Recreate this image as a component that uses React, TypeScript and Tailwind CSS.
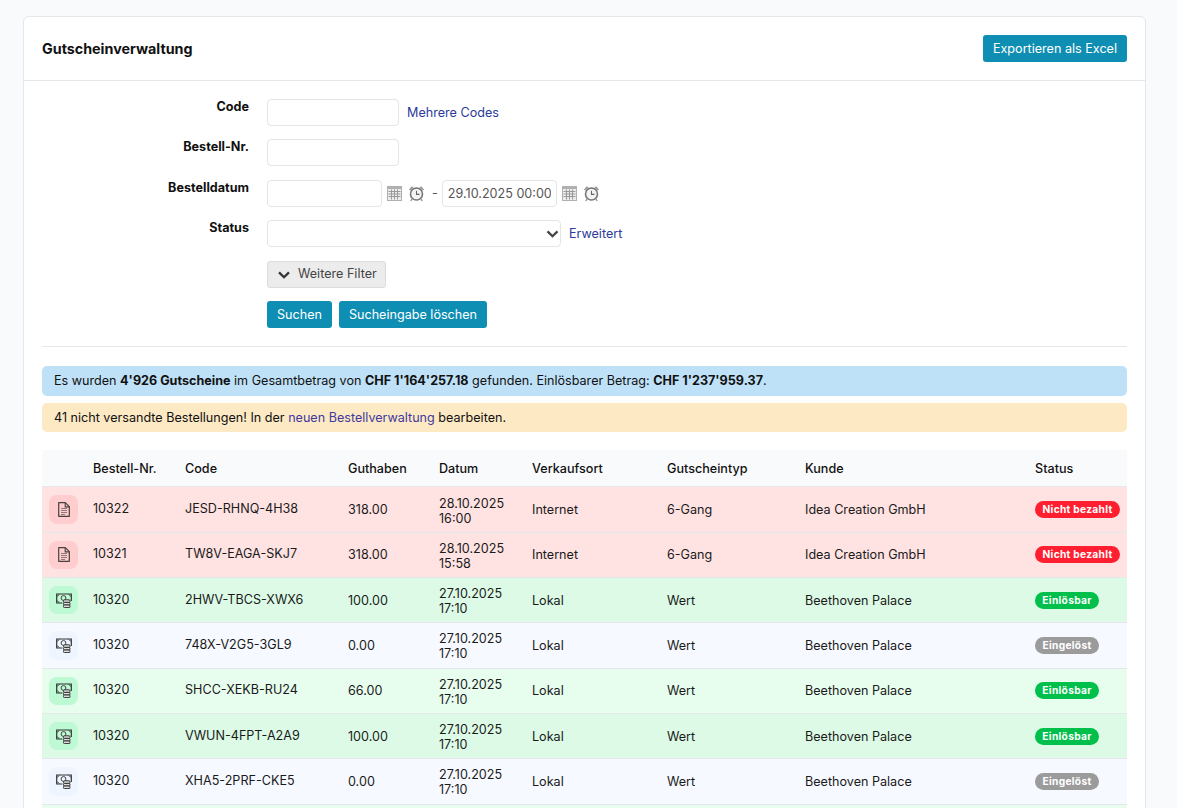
import React from 'react';

type Row = {
    nr: string;
    code: string;
    amount: string;
    date: string;
    time: string;
    place: string;
    type: string;
    customer: string;
    status: 'unpaid' | 'open' | 'used';
    stripe?: boolean;
};

const ROWS: Row[] = [
    { nr: '10322', code: 'JESD-RHNQ-4H38', amount: '318.00', date: '28.10.2025', time: '16:00', place: 'Internet', type: '6-Gang', customer: 'Idea Creation GmbH', status: 'unpaid' },
    { nr: '10321', code: 'TW8V-EAGA-SKJ7', amount: '318.00', date: '28.10.2025', time: '15:58', place: 'Internet', type: '6-Gang', customer: 'Idea Creation GmbH', status: 'unpaid' },
    { nr: '10320', code: '2HWV-TBCS-XWX6', amount: '100.00', date: '27.10.2025', time: '17:10', place: 'Lokal', type: 'Wert', customer: 'Beethoven Palace', status: 'open' },
    { nr: '10320', code: '748X-V2G5-3GL9', amount: '0.00', date: '27.10.2025', time: '17:10', place: 'Lokal', type: 'Wert', customer: 'Beethoven Palace', status: 'used' },
    { nr: '10320', code: 'SHCC-XEKB-RU24', amount: '66.00', date: '27.10.2025', time: '17:10', place: 'Lokal', type: 'Wert', customer: 'Beethoven Palace', status: 'open', stripe: true },
    { nr: '10320', code: 'VWUN-4FPT-A2A9', amount: '100.00', date: '27.10.2025', time: '17:10', place: 'Lokal', type: 'Wert', customer: 'Beethoven Palace', status: 'open' },
    { nr: '10320', code: 'XHA5-2PRF-CKE5', amount: '0.00', date: '27.10.2025', time: '17:10', place: 'Lokal', type: 'Wert', customer: 'Beethoven Palace', status: 'used' },
];

const CalendarIcon = () => (
    <svg width="15" height="15" viewBox="0 0 15 15" className="shrink-0">
        <rect x="0" y="0" width="15" height="15" fill="#b0b0b0" />
        <rect x="1" y="3" width="13" height="11" fill="#ececec" />
        <path d="M1.5 5.5h12M1.5 8h12M1.5 10.5h12M4.5 3.5v10M7.5 3.5v10M10.5 3.5v10" stroke="#9a9a9a" strokeWidth="1" fill="none" />
    </svg>
);

const ClockIcon = () => (
    <svg width="17" height="17" viewBox="0 0 17 17" fill="none" className="shrink-0">
        <circle cx="8.5" cy="9" r="6" stroke="#777" strokeWidth="1.6" fill="#f4f4f4" />
        <path d="M8.5 5.8v3.6h3" stroke="#666" strokeWidth="1.1" />
        <path d="M1 4.4 3.8 1.2 5.6 2.6 2.4 5.8zM16 4.4l-2.8-3.2-1.8 1.4 3.2 3.2z" fill="#999" />
        <path d="M4 14 2.8 16M13 14l1.2 2" stroke="#888" strokeWidth="1.3" />
    </svg>
);

const Chevron = ({ className }: { className: string }) => (
    <svg viewBox="0 0 14 9" fill="none" className={className}>
        <path d="M1.4 1.6 7 7l5.6-5.4" stroke="currentColor" strokeWidth="2.6" />
    </svg>
);

const DocIcon = () => (
    <svg width="12" height="15" viewBox="0 0 12 15" fill="none">
        <path d="M.7.7h6.6l4 4v9.6H.7z" stroke="#4a3f3f" strokeWidth="1.2" strokeLinejoin="round" />
        <path d="M7.2.9v4h4" stroke="#4a3f3f" strokeWidth="1.1" />
        <path d="M3 6.5h6M3 8.5h6M3 10.5h6M3 12.5h4" stroke="#8a7a7a" strokeWidth="1.1" />
    </svg>
);

const MoneyIcon = () => (
    <svg width="16" height="15" viewBox="0 0 16 15" fill="none">
        <path d="M6.5 10H.7V1h14.6v7" stroke="#333" strokeWidth="1.2" />
        <path d="M1 3.6 3.2 1.4M12.8 1.4 15 3.6M1 7.4l2.2 2.2" stroke="#333" strokeWidth="1" />
        <circle cx="7.5" cy="5" r="2.4" stroke="#444" strokeWidth="1" />
        <rect x="7.5" y="6.8" width="6.5" height="2.6" rx="1" fill="#ddd" stroke="#333" strokeWidth="1" />
        <rect x="7.5" y="9.4" width="6.5" height="2.6" rx="1" fill="#ddd" stroke="#333" strokeWidth="1" />
        <rect x="7.5" y="12" width="6.5" height="2.6" rx="1" fill="#ddd" stroke="#333" strokeWidth="1" />
    </svg>
);

const inputClass = 'h-[27px] rounded-[4px] border border-[#e5e5e5] bg-white';

const Label = ({ children }: { children: React.ReactNode }) => (
    <div className="w-[207px] shrink-0 text-right font-bold leading-[15px] text-[#111]">{children}</div>
);

const FormRow = ({ label, children }: { label?: string; children: React.ReactNode }) => (
    <div className="flex gap-[18px]">
        <Label>{label}</Label>
        <div className="flex items-center">{children}</div>
    </div>
);

const Badge = ({ status }: { status: Row['status'] }) => {
    if (status === 'unpaid') {
        return <span className="inline-block w-[85px] rounded-full bg-[#ff1f30] text-center text-[10.2px] font-bold leading-[17px] tracking-[0.3px] text-white">Nicht bezahlt</span>;
    }
    if (status === 'open') {
        return <span className="inline-block w-[64px] rounded-full bg-[#00c04b] text-center text-[10.2px] font-bold leading-[17px] tracking-[0.3px] text-white">Einlösbar</span>;
    }
    return <span className="inline-block w-[64px] rounded-full bg-[#9b9b9b] text-center text-[10.2px] font-bold leading-[17px] tracking-[0.3px] text-white">Eingelöst</span>;
};

const rowBg = (row: Row) => {
    if (row.status === 'unpaid') return 'bg-[#ffe2e2]';
    if (row.status === 'used') return 'bg-[#f6f9ff]';
    return row.stripe ? 'bg-[#e7fdee]' : 'bg-[#dcfae6]';
};

const iconBg = (row: Row) => {
    if (row.status === 'unpaid') return 'bg-[#ffcdcd]';
    if (row.status === 'used') return 'bg-[#eff5ff]';
    return 'bg-[#bdf9d2]';
};

export default function App() {
    return (
        <div
            className="h-[808px] overflow-hidden bg-[#f9fafb] px-[23px] pt-4 text-[12.6px] text-[#1a1a1a]"
            style={{ fontFamily: 'Inter, sans-serif', width: 1177 }}
        >
            <div className="w-[1123px] rounded-t-[6px] border border-[#e5e7eb] bg-white">
                {/* Header */}
                <div className="flex h-[64px] items-center justify-between border-b border-[#e5e7eb] px-[18px]">
                    <h1 className="text-[14.3px] font-bold text-[#111]">Gutscheinverwaltung</h1>
                    <button className="h-[27px] rounded-[3px] bg-[#0f8eb3] px-[10px] pt-[1px] text-white">Exportieren als Excel</button>
                </div>

                <div className="px-[18px] pt-[18px]">
                    {/* Filter */}
                    <div className="flex flex-col gap-[13.4px] border-b border-[#e5e7eb] pb-[18px]">
                        <FormRow label="Code">
                            <input className={`${inputClass} w-[132px]`} />
                            <a className="ml-2 pt-[1px] text-[#2b3a9b]">Mehrere Codes</a>
                        </FormRow>
                        <FormRow label="Bestell-Nr.">
                            <input className={`${inputClass} w-[132px]`} />
                        </FormRow>
                        <FormRow label="Bestelldatum">
                            <input className={`${inputClass} w-[115px]`} />
                            <span className="ml-[5px] flex items-center gap-[6px]"><CalendarIcon /><ClockIcon /></span>
                            <span className="ml-[7px] mr-[4px] text-[#555]">-</span>
                            <input className={`${inputClass} w-[115px] px-[5px] text-[#555]`} defaultValue="29.10.2025 00:00" />
                            <span className="ml-[5px] flex items-center gap-[6px]"><CalendarIcon /><ClockIcon /></span>
                        </FormRow>
                        <FormRow label="Status">
                            <div className="relative h-[27px] w-[294px]">
                                <select className={`${inputClass} w-full appearance-none`} />
                                <Chevron className="absolute right-[2px] top-[10px] h-[8px] w-[13px] text-[#444]" />
                            </div>
                            <a className="ml-2 pt-[1px] text-[#2b3a9b]">Erweitert</a>
                        </FormRow>
                        <FormRow>
                            <button className="flex h-[27px] w-[119px] items-center gap-[7px] rounded-[3px] border border-[#dcdcdc] bg-[#ececec] pl-[9px] pt-[1px] text-[#444]">
                                <Chevron className="h-[8px] w-[14px] text-[#333]" />
                                Weitere Filter
                            </button>
                        </FormRow>
                        <FormRow>
                            <div className="flex gap-[7px]">
                                <button className="h-[27px] w-[65px] rounded-[3px] bg-[#0f8eb3] pt-[1px] text-white">Suchen</button>
                                <button className="h-[27px] w-[148px] rounded-[3px] bg-[#0f8eb3] pt-[1px] text-white">Sucheingabe löschen</button>
                            </div>
                        </FormRow>
                    </div>

                    {/* Notices */}
                    <div className="mt-[19px] flex h-[30px] items-center rounded-[5px] bg-[#bfe1f8] px-[12px] pt-[1px] text-[#111]">
                        <span>Es wurden <b className="font-bold">4'926 Gutscheine</b> im Gesamtbetrag von <b className="font-bold">CHF 1'164'257.18</b> gefunden. Einlösbarer Betrag: <b className="font-bold">CHF 1'237'959.37</b>.</span>
                    </div>
                    <div className="mt-[7px] flex h-[29px] items-center rounded-[5px] bg-[#fde9c3] px-[12px] pt-[1px] text-[#111]">
                        <span>41 nicht versandte Bestellungen! In der <a className="text-[#3f3a9e]">neuen Bestellverwaltung</a> bearbeiten.</span>
                    </div>

                    {/* Table */}
                    <table className="mt-[18px] w-[1085px] table-fixed border-collapse text-left">
                        <colgroup>
                            <col className="w-[51px]" />
                            <col className="w-[92px]" />
                            <col className="w-[163px]" />
                            <col className="w-[91px]" />
                            <col className="w-[93px]" />
                            <col className="w-[135px]" />
                            <col className="w-[138px]" />
                            <col className="w-[230px]" />
                            <col className="w-[92px]" />
                        </colgroup>
                        <thead>
                            <tr className="h-[37px] border-b border-[#e5e7eb] bg-[#f9fafb]">
                                <th />
                                <th className="pt-[2px] font-medium text-[#111]">Bestell-Nr.</th>
                                <th className="pt-[2px] font-medium text-[#111]">Code</th>
                                <th className="pt-[2px] font-medium text-[#111]">Guthaben</th>
                                <th className="pt-[2px] font-medium text-[#111]">Datum</th>
                                <th className="pt-[2px] font-medium text-[#111]">Verkaufsort</th>
                                <th className="pt-[2px] font-medium text-[#111]">Gutscheintyp</th>
                                <th className="pt-[2px] font-medium text-[#111]">Kunde</th>
                                <th className="pt-[2px] font-medium text-[#111]">Status</th>
                            </tr>
                        </thead>
                        <tbody>
                            {ROWS.map((row) => (
                                <tr key={row.code} className={`h-[45.3px] border-b border-[#e5e7eb] ${rowBg(row)}`}>
                                    <td className="pl-[7px]">
                                        <div className={`flex h-[28.5px] w-[29px] items-center justify-center rounded-[8px] ${iconBg(row)}`}>
                                            {row.status === 'unpaid' ? <DocIcon /> : <MoneyIcon />}
                                        </div>
                                    </td>
                                    <td>{row.nr}</td>
                                    <td>{row.code}</td>
                                    <td className="pt-[2px]">{row.amount}</td>
                                    <td className="pt-[2px] leading-[15px]">{row.date}<br />{row.time}</td>
                                    <td className="pt-[2px]">{row.place}</td>
                                    <td className="pt-[2px]">{row.type}</td>
                                    <td className="pt-[2px]">{row.customer}</td>
                                    <td><Badge status={row.status} /></td>
                                </tr>
                            ))}
                            {/* next row, only its top edge is in view */}
                            <tr className="h-[45.3px] bg-[#e7fdee]"><td colSpan={9} /></tr>
                        </tbody>
                    </table>
                </div>
            </div>
        </div>
    );
}
